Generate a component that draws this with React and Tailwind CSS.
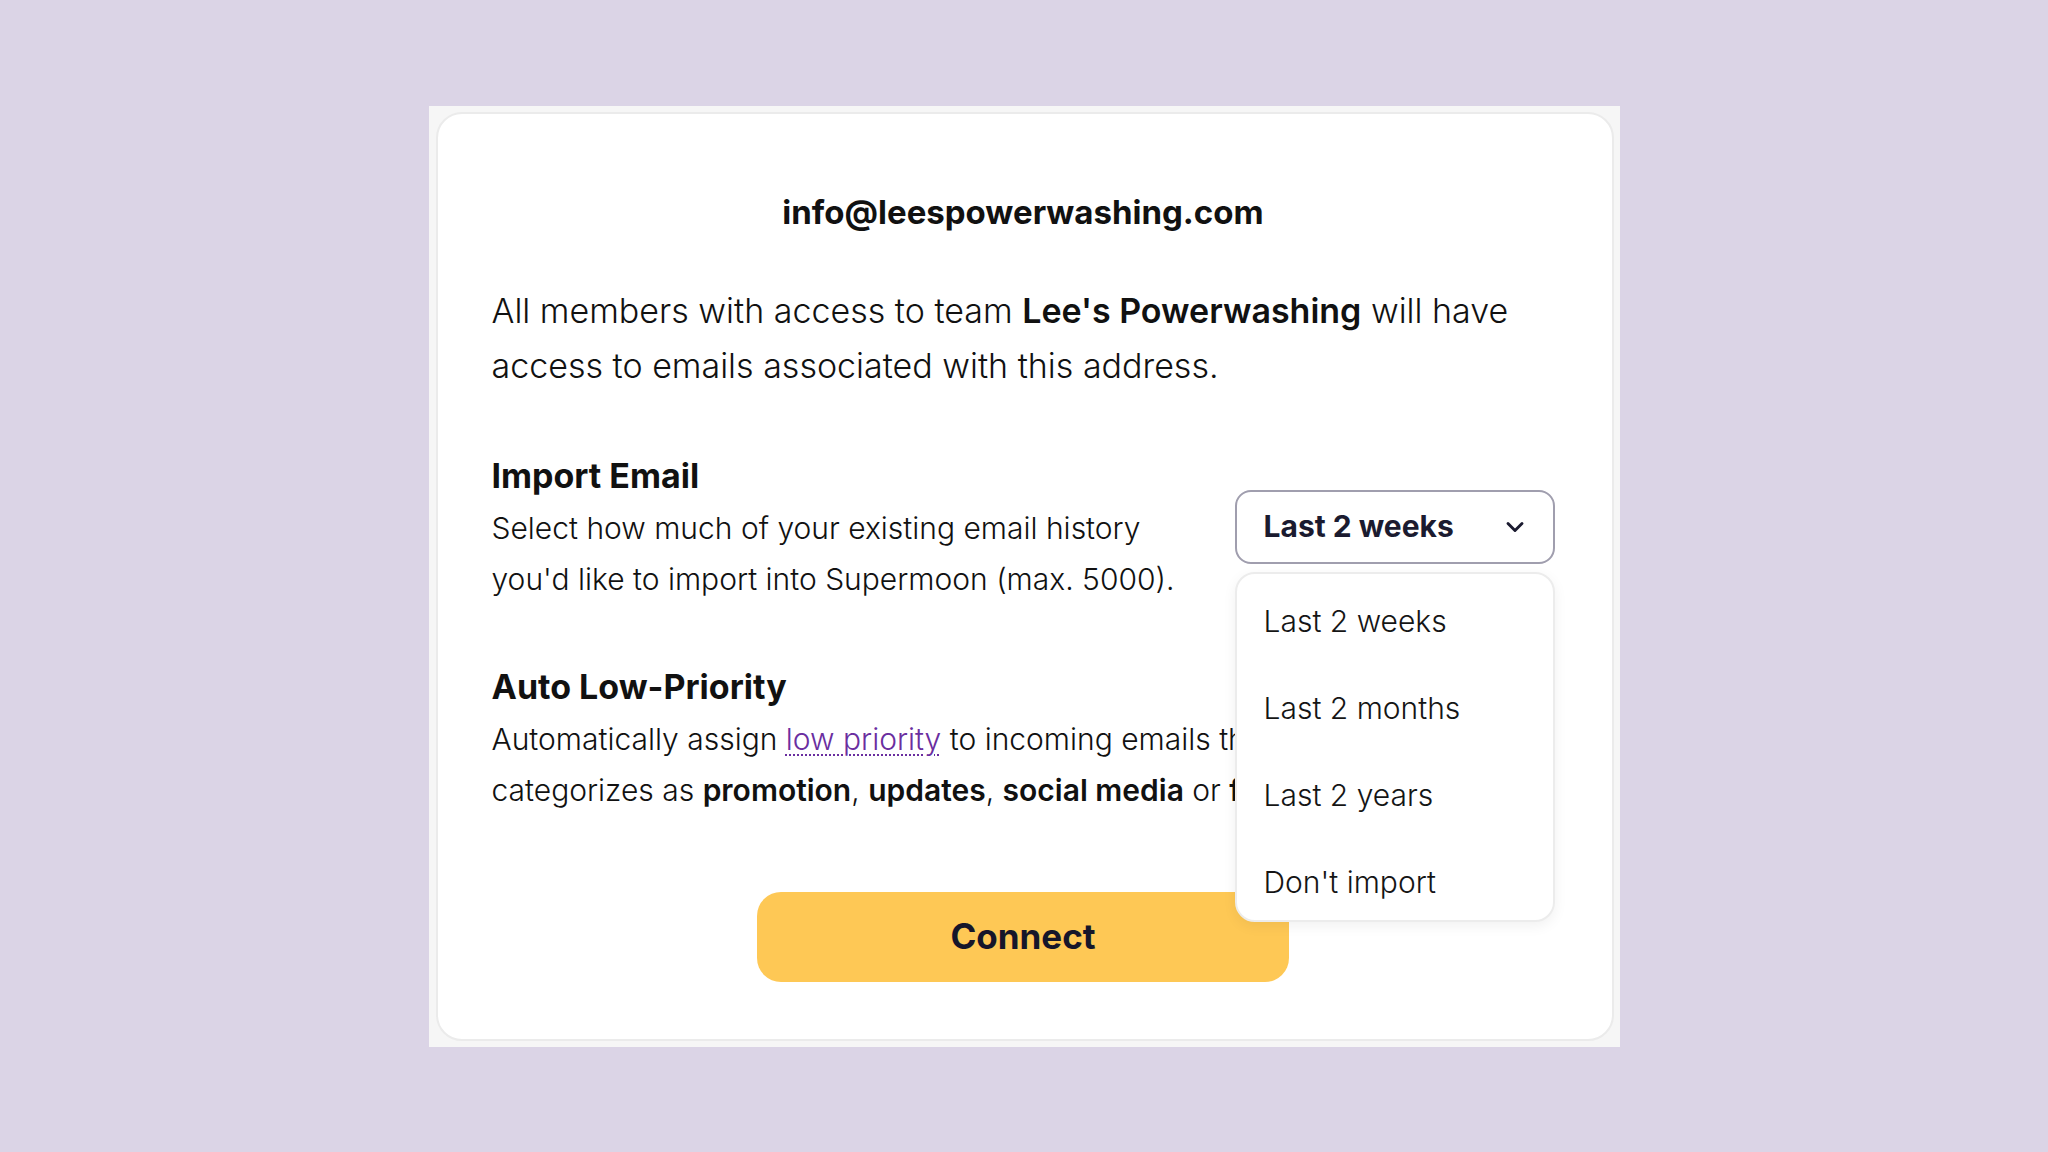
import React from 'react'
import { ChevronDown } from 'lucide-react'

const options = ['Last 2 weeks', 'Last 2 months', 'Last 2 years', "Don't import"]

export default function App() {
  return (
    <div
      className="min-h-screen w-full bg-[#dbd4e6] flex items-center justify-center"
      style={{ fontFamily: 'Inter, "Noto Sans", sans-serif' }}
    >
      <div className="w-[1191px] h-[941px] bg-[#f6f6f6] p-[6px] pl-[7px]">
        <div className="h-full bg-white border-2 border-[#ebebeb] rounded-[26px] pl-[54px] pr-[57px] pt-[78px] text-[#111111]">

          {/* Email address */}
          <h1 className="text-center text-[33px] font-bold leading-[40px]">
            info@leespowerwashing.com
          </h1>

          <p className="mt-[51px] text-[34px] leading-[55px] font-light whitespace-nowrap">
            All members with access to team <span className="font-semibold">Lee's Powerwashing</span> will have<br />
            access to emails associated with this address.
          </p>

          {/* Import Email */}
          <div className="mt-[61px] flex justify-between items-start">
            <div>
              <h2 className="text-[34px] font-bold leading-[44px]">Import Email</h2>
              <p className="mt-[5px] text-[30px] leading-[51px] font-light whitespace-nowrap">
                Select how much of your existing email history<br />
                you'd like to import into Supermoon (max. 5000).
              </p>
            </div>

            <div className="relative mt-[36px]">
              <button className="w-[320px] h-[74px] border-2 border-[#a09eae] rounded-[16px] flex items-center justify-between pl-[27px] pr-[24px] text-[#1b1b30] text-[30px] font-bold">
                Last 2 weeks
                <ChevronDown size={28} strokeWidth={2.5} />
              </button>
              <div className="absolute left-0 top-[82px] z-10 w-[320px] h-[350px] bg-white border-2 border-[#ececec] rounded-[20px] shadow-[0_4px_14px_rgba(0,0,0,0.06)] pt-[4px]">
                {options.map((o) => (
                  <div key={o} className="h-[87px] flex items-center pl-[27px] text-[30px] font-light text-[#151515]">
                    {o}
                  </div>
                ))}
              </div>
            </div>
          </div>

          {/* Auto Low-Priority */}
          <div className="mt-[60px]">
            <h2 className="text-[34px] font-bold leading-[44px]">Auto Low-Priority</h2>
            <p className="mt-[5px] text-[30px] leading-[51px] font-light whitespace-nowrap">
              Automatically assign{' '}
              <a className="text-[#6a2ea0] underline decoration-dotted decoration-2 underline-offset-[5px]">low priority</a>{' '}
              to incoming emails that Supermoon<br />
              categorizes as <span className="font-semibold">promotion</span>, <span className="font-semibold">updates</span>,{' '}
              <span className="font-semibold">social media</span> or <span className="font-semibold">forums</span>.
            </p>
          </div>

          <div className="mt-[76px] flex justify-center">
            <button className="w-[532px] h-[90px] rounded-[24px] bg-[#fec855] text-[#16162a] text-[35px] font-bold">
              Connect
            </button>
          </div>
        </div>
      </div>
    </div>
  )
}
